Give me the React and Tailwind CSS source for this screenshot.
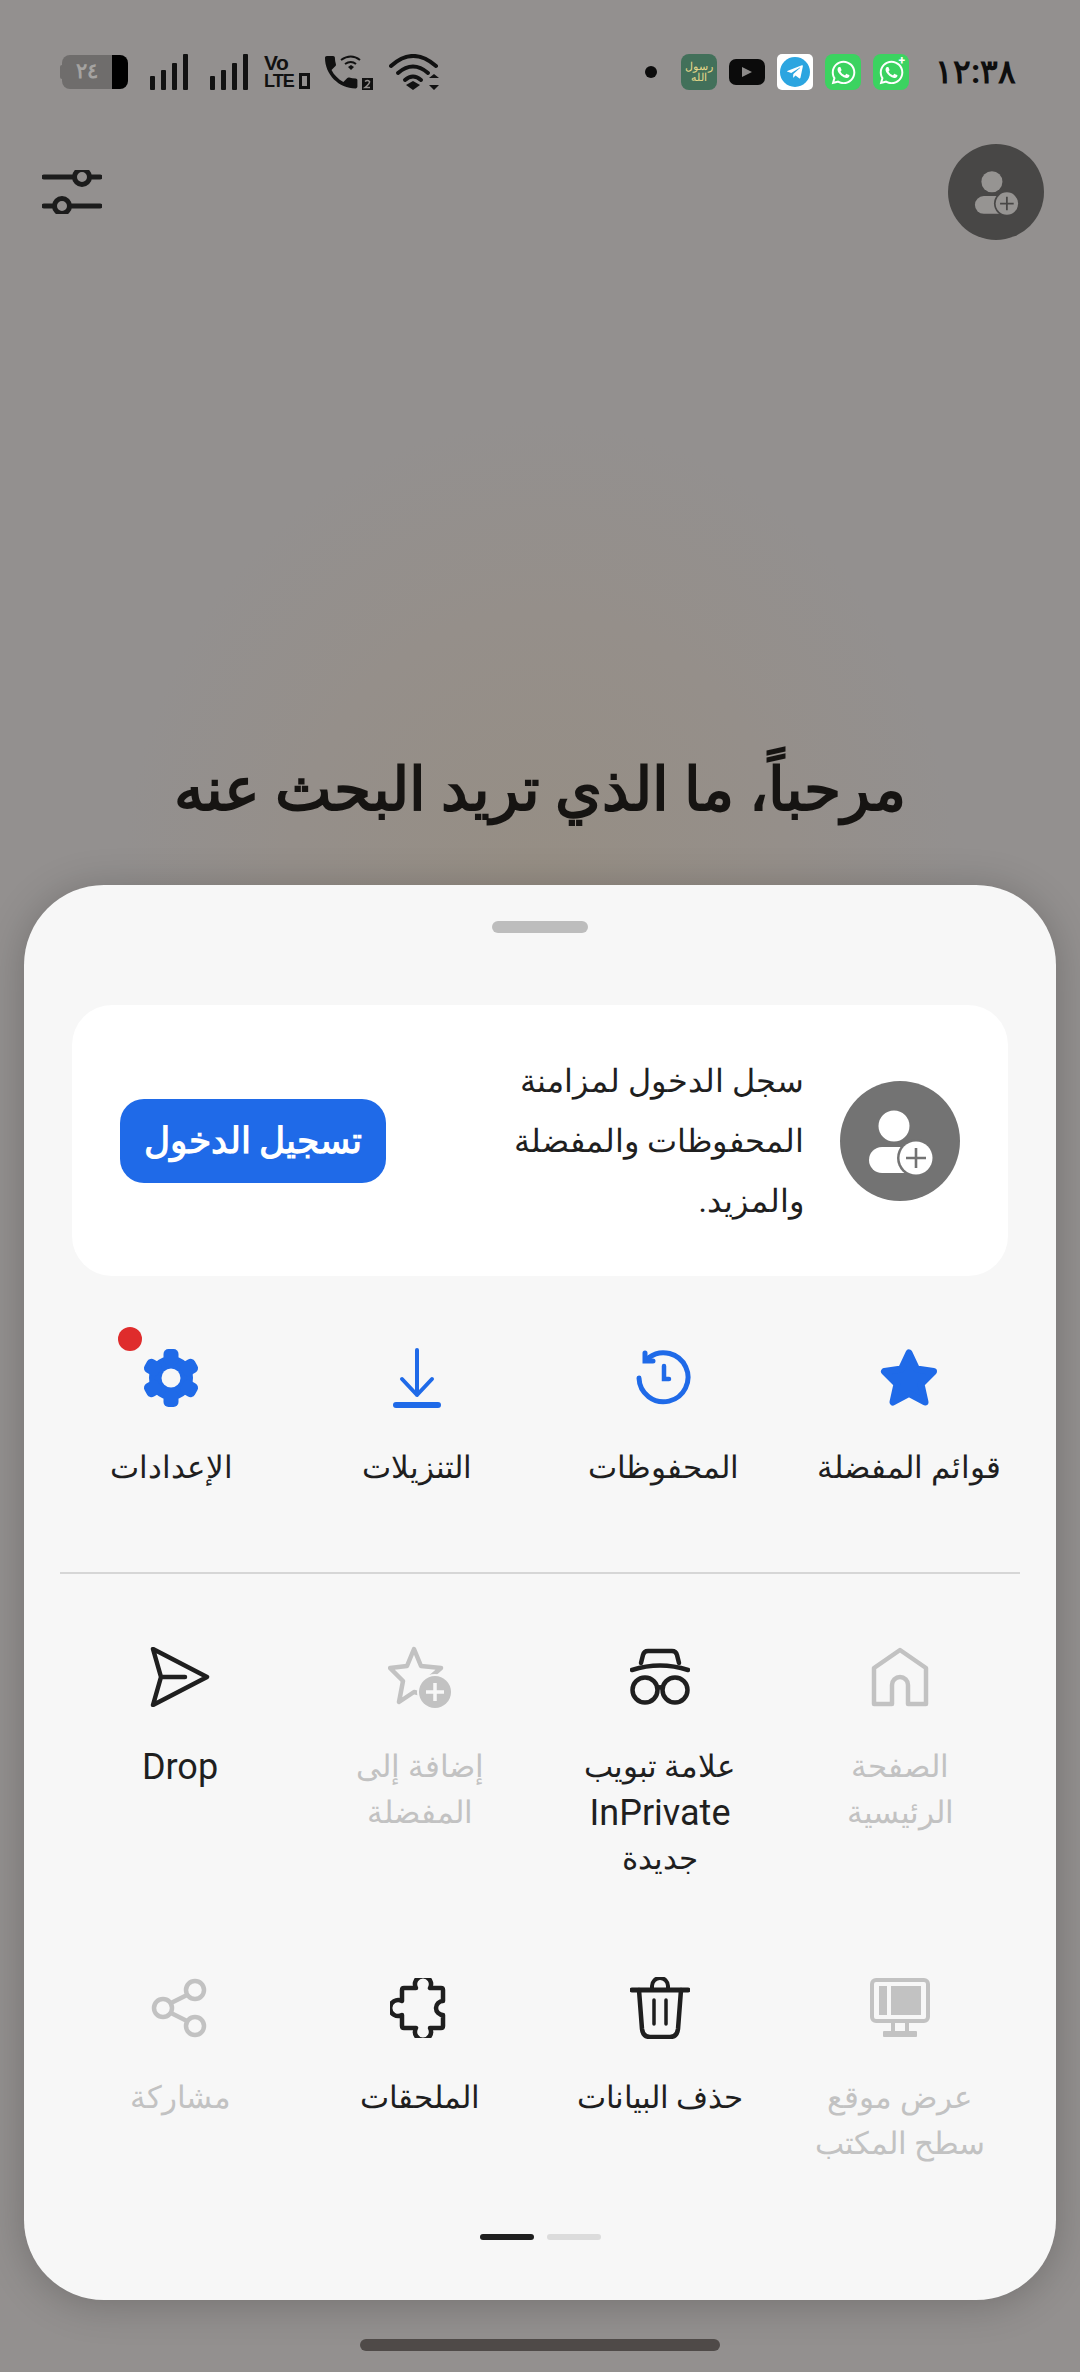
import { FaWhatsapp, FaTelegramPlane } from "react-icons/fa";

const INK = "#1f1f1f";
const OFF = "#c2c2c2";

function UserPlus({ bg, fg, className, small }) {
  return (
    <svg viewBox="0 0 120 120" className={className}>
      <circle cx="60" cy="60" r="60" fill={bg} />
      <g transform={small ? "translate(9 9) scale(0.85)" : undefined}>
        <circle cx="54" cy="45" r="15.5" fill={fg} />
        <rect x="29" y="66" width="50" height="26" rx="13" fill={fg} />
        <circle cx="76" cy="77" r="19" fill={bg} />
        <circle cx="76" cy="77" r="16.5" fill={fg} />
        <path d="M76 67V87M66 77H86" stroke={bg} strokeWidth="2.6" />
      </g>
    </svg>
  );
}

function Signal() {
  return (
    <svg viewBox="0 0 39 36" className="w-[39px] h-[36px]" fill="#111">
      <rect x="0" y="22" width="5" height="14" rx="1" />
      <rect x="11" y="16" width="5" height="20" rx="1" />
      <rect x="22" y="9" width="5" height="27" rx="1" />
      <rect x="33" y="0" width="5" height="36" rx="1" />
    </svg>
  );
}

function StatusBar() {
  return (
    <div dir="ltr" className="flex items-center h-[36px] mt-[54px] pl-[60px] pr-[66px]">
      <div className="w-[2px] h-[14px] bg-[#6f6d6c] rounded-l-[2px]" />
      <div className="flex w-[66px] h-[34px] rounded-[8px] overflow-hidden">
        <div className="flex-1 bg-[#6f6d6c] flex items-center justify-center text-[21px] font-bold text-[#a5a3a1]">٢٤</div>
        <div className="w-[16px] bg-black" />
      </div>
      <div className="ml-[22px]"><Signal /></div>
      <div className="ml-[21px]"><Signal /></div>
      <div className="ml-[15px] w-[46px] h-[36px] flex flex-col text-[#111] font-bold font-['Liberation_Sans',sans-serif]">
        <span className="text-[21px] leading-[18px] tracking-[-0.5px]">Vo</span>
        <div className="flex items-center h-[18px]">
          <span className="text-[19px] leading-[18px] tracking-[-1px] scale-x-95 origin-left">LTE</span>
          <div className="ml-auto w-[11px] h-[16px] border-[3px] border-[#111]" />
        </div>
      </div>
      <svg viewBox="0 0 48 36" className="ml-[15px] w-[48px] h-[36px]">
        <path transform="translate(-5.4 -3.4) scale(1.8)" fill="#111" d="M6.62 10.79c1.44 2.83 3.76 5.14 6.59 6.59l2.2-2.2c.27-.27.67-.36 1.02-.24 1.12.37 2.33.57 3.57.57.55 0 1 .45 1 1V20c0 .55-.45 1-1 1-9.39 0-17-7.61-17-17 0-.55.45-1 1-1h3.5c.55 0 1 .45 1 1 0 1.25.2 2.45.57 3.57.11.35.03.74-.25 1.02l-2.2 2.2z" />
        <path d="M16 6Q26 -1 35 6M20 10Q26 6 31 10" fill="none" stroke="#111" strokeWidth="2" />
        <path d="M23 13L26 11L29 13L26 16Z" fill="#111" />
        <rect x="37" y="24" width="11" height="12" fill="#111" />
        <path d="M40 27.5Q42.5 25.5 44.5 27.5Q45 29.5 40 33.5H45" fill="none" stroke="#94908e" strokeWidth="1.6" />
      </svg>
      <svg viewBox="0 0 51 36" className="ml-[16px] w-[51px] h-[36px]">
        <g fill="none" stroke="#111" strokeWidth="4" strokeLinecap="round">
          <path d="M2 12Q24 -8 47 12" />
          <path d="M9 19Q24 6 39 19" />
          <path d="M16 26Q24 19 32 26" />
        </g>
        <path d="M24 27L31 31L24 36L17 31Z" fill="#111" />
        <path d="M40 24L45 20L50 24ZM40 31H50L45 36Z" fill="#111" />
      </svg>
      <div className="flex-1" />
      <div className="w-[12px] h-[12px] rounded-full bg-[#0c0c0c]" />
      <div className="ml-[24px] w-[36px] h-[36px] rounded-[8px] bg-[#42705a] flex items-center justify-center overflow-hidden text-[11px] leading-[11px] text-center text-[#e6d88a]">رسول الله</div>
      <div className="ml-[12px] w-[36px] h-[26px] rounded-[7px] bg-[#0b0b0b] flex items-center justify-center">
        <svg viewBox="0 0 12 12" className="w-[12px] h-[12px]"><path d="M1 1L11 6L1 11Z" fill="#8d8b8a" /></svg>
      </div>
      <div className="ml-[12px] w-[36px] h-[36px] rounded-[5px] bg-white flex items-center justify-center">
        <div className="w-[30px] h-[30px] rounded-full bg-[#2ca5e0] flex items-center justify-center">
          <FaTelegramPlane className="text-white text-[18px]" />
        </div>
      </div>
      <div className="ml-[12px] w-[36px] h-[36px] rounded-[8px] bg-[#3bd360] flex items-center justify-center">
        <FaWhatsapp className="text-white text-[27px]" />
      </div>
      <div className="relative ml-[12px] w-[36px] h-[36px] rounded-[8px] bg-[#3bd360] flex items-center justify-center">
        <FaWhatsapp className="text-white text-[27px]" />
        <span className="absolute right-[4px] top-[-2px] text-white text-[12px] font-bold">+</span>
      </div>
      <div className="ml-[26px] w-[79px] text-right whitespace-nowrap text-[#0e0e0e] text-[33px] leading-[36px] font-bold">١٢:٣٨</div>
    </div>
  );
}

const Star = <svg viewBox="0 0 60 60" className="w-[60px] h-[60px]"><path d="M30 5L37.5 21L54.5 23.5L42 36L46 54L30 45.5L14 54L18 36L5.5 23.5L22.5 21Z" fill="#1f6ae8" stroke="#1f6ae8" strokeWidth="7" strokeLinejoin="round" /></svg>;
const Clock = <svg viewBox="0 0 60 60" className="w-[60px] h-[60px]" fill="none" stroke="#1f6ae8" strokeWidth="5" strokeLinecap="round"><path d="M16 9.5A24.5 24.5 0 1 1 6 30" /><path d="M12 5V13H20" /><path d="M31 18V31H36" strokeWidth="4.5" /></svg>;
const Download = <svg viewBox="0 0 60 60" className="w-[60px] h-[60px]" fill="none" stroke="#1f6ae8" strokeLinecap="round" strokeLinejoin="round"><path d="M30 2V47M15 31L30 47L45 31" strokeWidth="4" /><path d="M9 57H51" strokeWidth="6" /></svg>;
const Gear = (
  <svg viewBox="0 0 60 60" className="w-[60px] h-[60px]">
    <g fill="#1f6ae8">
      <circle cx="30" cy="30" r="22" />
      {[0, 60, 120, 180, 240, 300].map((deg) => (
        <rect key={deg} x="22.5" y="1" width="15" height="16" rx="5" transform={`rotate(${deg} 30 30)`} />
      ))}
    </g>
    <circle cx="30" cy="30" r="9.5" fill="#f7f7f7" />
  </svg>
);
const Send = <svg viewBox="0 0 60 60" className="w-[60px] h-[60px]" fill="none" stroke={INK} strokeWidth="4.5" strokeLinejoin="round" strokeLinecap="round"><path d="M3 2L57 30L3 58L11 30ZM11 30H35" /></svg>;
const StarPlus = (
  <svg viewBox="0 0 64 62" className="w-[64px] h-[62px]">
    <path d="M26 3L33 20L53 22L38 35L42 50L26 46L11 56L15 35L2 22L19 20Z" fill="none" stroke={OFF} strokeWidth="4.5" strokeLinejoin="round" />
    <circle cx="47" cy="46" r="18" fill="#f7f7f7" />
    <circle cx="47" cy="46" r="16" fill={OFF} />
    <path d="M47 37V55M38 46H56" stroke="#f7f7f7" strokeWidth="3.5" />
  </svg>
);
const Incognito = (
  <svg viewBox="0 0 60 60" className="w-[60px] h-[60px]" fill="none" stroke={INK} strokeWidth="4.5" strokeLinecap="round">
    <path d="M11 16L13 8Q14 4 18 4H42Q46 4 47 8L49 16" />
    <path d="M2 23Q30 14 58 23" />
    <circle cx="15" cy="43" r="12.5" />
    <circle cx="45" cy="43" r="12.5" />
    <path d="M27.5 41Q30 39.5 32.5 41" />
  </svg>
);
const Home = <svg viewBox="0 0 60 60" className="w-[60px] h-[60px]" fill="none" stroke={OFF} strokeWidth="4.5" strokeLinejoin="round"><path d="M4 57V21L30 3L56 21V57H38V38A8 8 0 0 0 22 38V57Z" /></svg>;
const Share = (
  <svg viewBox="0 0 60 60" className="w-[60px] h-[60px]" fill="none" stroke={OFF} strokeWidth="4.5">
    <circle cx="45" cy="12" r="9" />
    <circle cx="13" cy="30" r="9" />
    <circle cx="45" cy="48" r="9" />
    <path d="M21 25L37 17M21 35L37 43" />
  </svg>
);
const Puzzle = <svg viewBox="0 0 60 60" className="w-[60px] h-[60px]" fill="none" stroke={INK} strokeWidth="4.5" strokeLinejoin="round"><path d="M14 10H26A8 8 0 1 1 40 10H51Q53 10 53 12V23A7 7 0 1 0 53 37V48Q53 50 51 50H40A8 8 0 1 1 26 50H14Q12 50 12 48V37A8 8 0 1 1 12 23V12Q12 10 14 10Z" /></svg>;
const Trash = (
  <svg viewBox="0 0 60 62" className="w-[60px] h-[62px]" fill="none" stroke={INK} strokeLinecap="round" strokeLinejoin="round">
    <path d="M22 12V9A8 8 0 0 1 38 9V12" strokeWidth="4" />
    <path d="M2 13H58" strokeWidth="5" />
    <path d="M9 13L12 52Q13 60 20 60H40Q47 60 48 52L51 13" strokeWidth="4.5" />
    <path d="M24 23V47M36 23V47" strokeWidth="3.5" />
  </svg>
);
const Desktop = (
  <svg viewBox="0 0 60 60" className="w-[60px] h-[60px]">
    <rect x="2" y="2" width="56" height="41" rx="4" fill="none" stroke={OFF} strokeWidth="4" />
    <rect x="9" y="8" width="8" height="29" fill={OFF} />
    <rect x="21" y="8" width="30" height="29" fill={OFF} />
    <path d="M23 43V54M37 43V54" stroke={OFF} strokeWidth="4" />
    <rect x="13" y="53" width="34" height="6" rx="1" fill={OFF} />
  </svg>
);

function Tile({ icon, label, off, badge }) {
  return (
    <div className="flex flex-col items-center">
      <div className="relative h-[60px] flex items-center justify-center">
        {icon}
        {badge && <div className="absolute left-[-23px] top-[-21px] w-[24px] h-[24px] rounded-full bg-[#df2c2c]" />}
      </div>
      <div className={`mt-[37px] text-center ${off ? "text-[#c2c2c2]" : "text-[#1f1f1f]"}`}>
        {label.split("\n").map((line) => (
          <div key={line} className={/[A-Za-z]/.test(line) ? "text-[36px] leading-[46px]" : "text-[31px] leading-[46px]"}>
            {line}
          </div>
        ))}
      </div>
    </div>
  );
}

const topRow = [
  { icon: Star, label: "قوائم المفضلة" },
  { icon: Clock, label: "المحفوظات" },
  { icon: Download, label: "التنزيلات" },
  { icon: Gear, label: "الإعدادات", badge: true },
];

const rowA = [
  { icon: Home, label: "الصفحة\nالرئيسية", off: true },
  { icon: Incognito, label: "علامة تبويب\nInPrivate\nجديدة" },
  { icon: StarPlus, label: "إضافة إلى\nالمفضلة", off: true },
  { icon: Send, label: "Drop" },
];

const rowB = [
  { icon: Desktop, label: "عرض موقع\nسطح المكتب", off: true },
  { icon: Trash, label: "حذف البيانات" },
  { icon: Puzzle, label: "الملحقات" },
  { icon: Share, label: "مشاركة", off: true },
];

export default function App() {
  return (
    <div className="w-[1080px] h-[2372px] flex flex-col overflow-hidden bg-[#93908f] bg-[radial-gradient(ellipse_420px_480px_at_50%_900px,#968e84_0%,#958f8a_60%,#93908f_100%)] font-['Roboto',sans-serif]">
      <StatusBar />

      <div className="flex items-center justify-between mt-[54px] h-[96px] pl-[42px] pr-[36px]">
        <svg viewBox="0 0 60 44" className="w-[60px] h-[44px]" fill="none" stroke="#1c1c1c" strokeWidth="5" strokeLinecap="round">
          <path d="M2 7H32M48 7H58M2 36H12M28 36H58" />
          <circle cx="40" cy="7" r="7.5" />
          <circle cx="20" cy="36" r="7.5" />
        </svg>
        <UserPlus small bg="#484746" fg="#969492" className="w-[96px] h-[96px]" />
      </div>

      <div className="flex-1 flex items-end justify-center pb-[59px]">
        <h1 dir="rtl" className="text-[60px] leading-[72px] font-bold text-[#161412]">مرحباً، ما الذي تريد البحث عنه</h1>
      </div>

      <div dir="rtl" className="mx-[24px] h-[1415px] rounded-[80px] bg-[#f7f7f7] shadow-[0_4px_40px_rgba(0,0,0,0.22)] flex flex-col items-stretch">
        <div className="self-center mt-[36px] w-[96px] h-[12px] rounded-full bg-[#bdbdbd]" />

        <div className="mx-[48px] mt-[72px] h-[271px] rounded-[40px] bg-white flex items-center pr-[48px] pl-[48px]">
          <UserPlus bg="#737373" fg="#ffffff" className="w-[120px] h-[120px] shrink-0" />
          <p className="mr-[36px] text-[32px] leading-[60px] text-[#1f1f1f]">
            سجل الدخول لمزامنة
            <br />
            المحفوظات والمفضلة
            <br />
            والمزيد.
          </p>
          <button className="mr-auto w-[266px] h-[84px] rounded-[24px] bg-[#1f6ae8] text-white text-[36px] font-bold">تسجيل الدخول</button>
        </div>

        <div className="grid grid-cols-4 mx-[24px] mt-[72px]">
          {topRow.map((t) => <Tile key={t.label} {...t} />)}
        </div>

        <div className="mx-[36px] mt-[81px] h-[2px] bg-[#d6d6d6]" />

        <div className="grid grid-cols-4 mx-[36px] mt-[73px] gap-y-[96px]">
          {rowA.map((t) => <Tile key={t.label} {...t} />)}
          {rowB.map((t) => <Tile key={t.label} {...t} />)}
        </div>

        <div dir="ltr" className="flex justify-center gap-[13px] mt-auto mb-[60px]">
          <div className="w-[54px] h-[6px] rounded-full bg-[#1f1f1f]" />
          <div className="w-[54px] h-[6px] rounded-full bg-[#dcdcdc]" />
        </div>
      </div>

      <div className="self-center mt-[39px] mb-[21px] w-[360px] h-[12px] rounded-full bg-[#4f4a48]" />
    </div>
  );
}
